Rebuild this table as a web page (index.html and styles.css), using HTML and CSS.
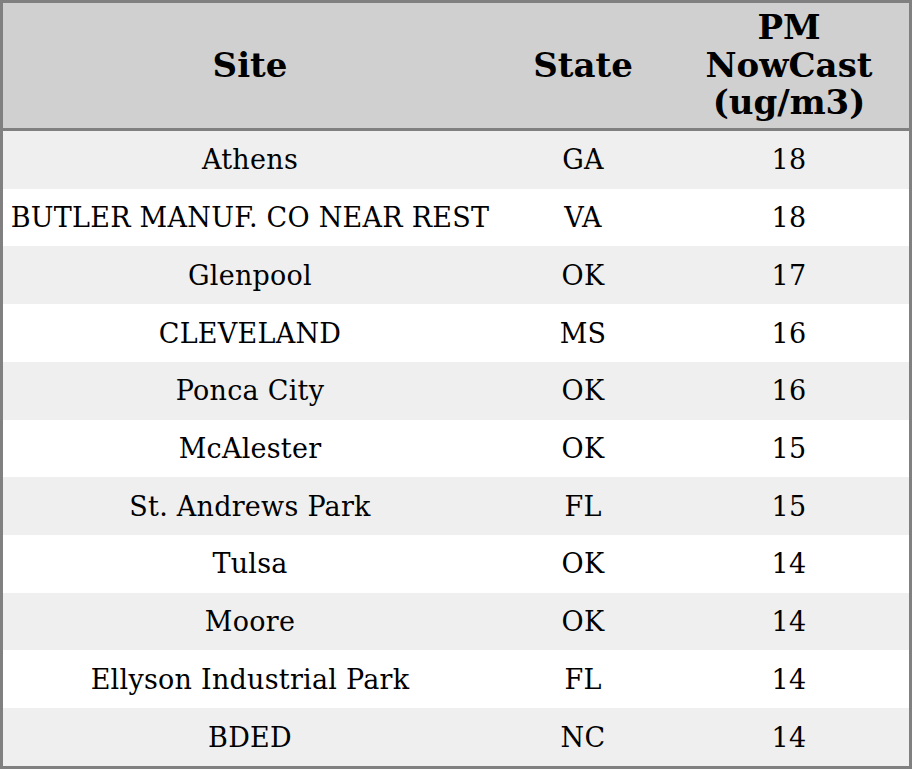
FILE: index.html
```html
<!DOCTYPE html>
<html>
<head>
<meta charset="utf-8">
<link rel="stylesheet" href="styles.css">
</head>
<body>
<table class="aq-table">
  <colgroup>
    <col class="col-site">
    <col class="col-state">
    <col class="col-pm">
  </colgroup>
  <thead>
    <tr>
      <th>Site</th>
      <th>State</th>
      <th>PM<br>NowCast<br>(ug/m3)</th>
    </tr>
  </thead>
  <tbody>
    <tr><td>Athens</td><td>GA</td><td>18</td></tr>
    <tr><td>BUTLER MANUF. CO NEAR REST</td><td>VA</td><td>18</td></tr>
    <tr><td>Glenpool</td><td>OK</td><td>17</td></tr>
    <tr><td>CLEVELAND</td><td>MS</td><td>16</td></tr>
    <tr><td>Ponca City</td><td>OK</td><td>16</td></tr>
    <tr><td>McAlester</td><td>OK</td><td>15</td></tr>
    <tr><td>St. Andrews Park</td><td>FL</td><td>15</td></tr>
    <tr><td>Tulsa</td><td>OK</td><td>14</td></tr>
    <tr><td>Moore</td><td>OK</td><td>14</td></tr>
    <tr><td>Ellyson Industrial Park</td><td>FL</td><td>14</td></tr>
    <tr><td>BDED</td><td>NC</td><td>14</td></tr>
  </tbody>
</table>
</body>
</html>
```
FILE: styles.css
```css
html, body {
  margin: 0;
  padding: 0;
  background: #ffffff;
}

.aq-table {
  width: 912px;
  height: 769px;
  table-layout: fixed;
  border-collapse: separate;
  border-spacing: 0;
  border: 3px solid #808080;
  box-sizing: border-box;
  font-family: "DejaVu Serif", serif;
  color: #000;
}

.col-site { width: 494px; }
.col-state { width: 172px; }
.col-pm { width: 240px; }

.aq-table th {
  height: 128px;
  padding: 0 2px;
  box-sizing: border-box;
  background: #d0d0d0;
  border-bottom: 3px solid #808080;
  font-size: 34px;
  font-weight: bold;
  line-height: 37.5px;
  text-align: center;
  vertical-align: middle;
}

.aq-table td {
  height: 57.7px;
  box-sizing: border-box;
  padding: 1px 2px 0;
  font-size: 27px;
  line-height: 30px;
  letter-spacing: 0.25px;
  text-align: center;
  vertical-align: middle;
  white-space: nowrap;
}

.aq-table tbody tr:nth-child(odd) td {
  background: #efefef;
}

.aq-table tbody tr:nth-child(even) td {
  background: #ffffff;
}
```
